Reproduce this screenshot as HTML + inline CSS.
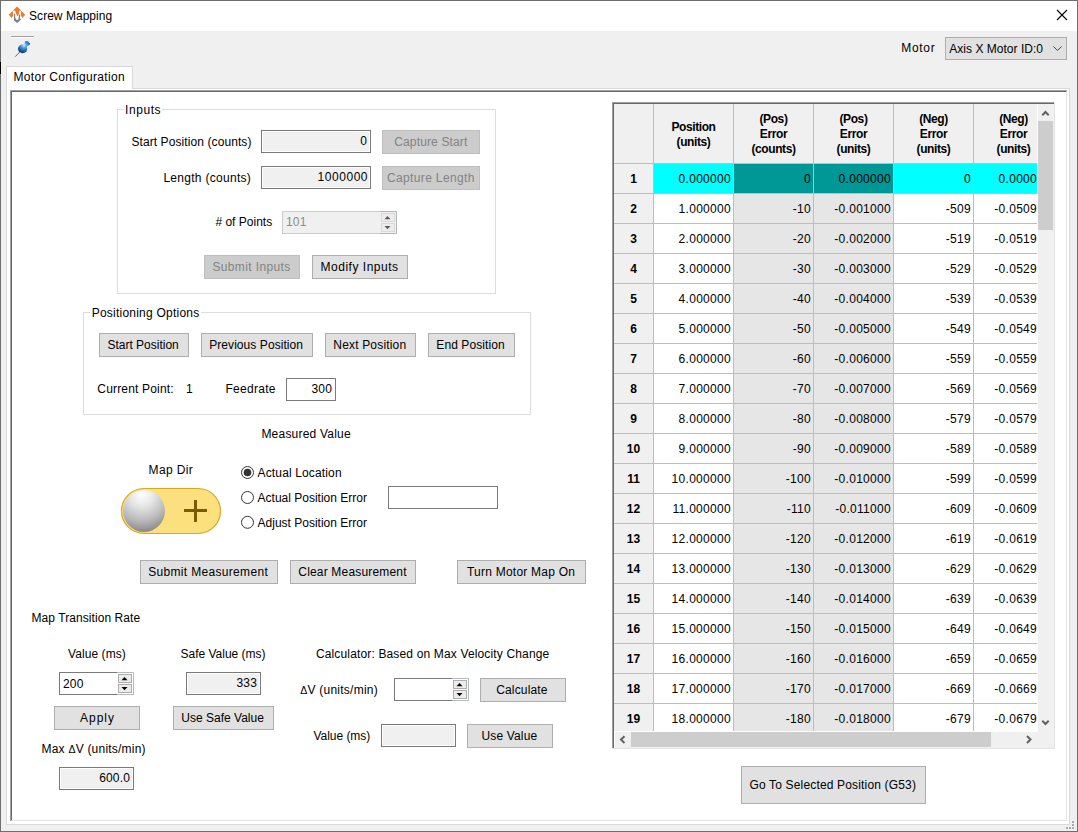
<!DOCTYPE html><html><head><meta charset="utf-8"><style>
html,body{margin:0;padding:0;} body{width:1078px;height:832px;position:relative;overflow:hidden;background:#f0f0f0;font-family:"Liberation Sans", sans-serif;font-size:12px;color:#000;}
.t{position:absolute;white-space:nowrap;line-height:15px;font-size:12px;}
.b{font-weight:bold;}
</style></head><body>
<div style="position:absolute;left:0px;top:0px;width:1076px;height:830px;border:1px solid #6e6e6e;background:#f0f0f0;"></div>
<div style="position:absolute;left:1px;top:1px;width:1076px;height:30px;background:#fff;"></div>
<div style="position:absolute;left:0px;top:62px;width:1px;height:12px;background:#000;"></div>
<svg style="position:absolute;left:0px;top:0px" width="30" height="30" viewBox="0 0 30 30"><path d="M17 6.5 L21.3 10.8 L19.2 10.8 L19 13.2 L18 16.2 L17.3 16.2 L15.8 13 L15.2 10.8 L12.8 10.8 Z" fill="#ee7b2b"/><path d="M8.8 14.8 L12.8 10.8 L13.2 15.6 L11.6 18 Z" fill="#ee7b2b"/><path d="M25.2 14.8 L21.2 10.8 L20.8 15.6 L22.4 18 Z" fill="#ee7b2b"/><path d="M14 13.8 L15.2 13.8 L15.2 17.6 L16.2 19.8 L18.4 19.8 L18.6 17.8 L19.2 14.6 L20.1 14.6 L20.1 18.6 L21 19.4 L17.2 23 L14 20.6 Z" fill="#7b7e83"/></svg>
<div class="t" style="left:29.10px;top:9px;letter-spacing:0.025px;">Screw Mapping</div>
<svg style="position:absolute;left:1056px;top:9px" width="12" height="12"><path d="M1 1L11 11M11 1L1 11" stroke="#000" stroke-width="1.1"/></svg>
<div style="position:absolute;left:11px;top:36px;width:23px;height:1px;background:#a0a0a0;"></div>
<div style="position:absolute;left:11px;top:37px;width:23px;height:1px;background:#fff;"></div>
<svg style="position:absolute;left:14px;top:40px" width="18" height="18" viewBox="0 0 18 18"><defs><radialGradient id="pg" cx="0.5" cy="0.35" r="0.65"><stop offset="0" stop-color="#d6eeff"/><stop offset="0.35" stop-color="#4f9ce0"/><stop offset="0.75" stop-color="#1b5ea6"/><stop offset="1" stop-color="#0a3468"/></radialGradient></defs><path d="M1.2 16.7 L6 11.8" stroke="#6a6a6a" stroke-width="1"/><path d="M4 8.5 Q4.5 5 8 4.5 L10.5 4 L11 1.2 L13.5 1 L16.2 3.6 L15.3 5.3 L12.8 6 Q13.8 9 12.5 11.5 Q10 13.6 7.5 13 Q4 12 4 8.5 Z" fill="url(#pg)"/></svg>
<div class="t" style="left:901.20px;top:41px;letter-spacing:0.700px;">Motor</div>
<div style="position:absolute;left:945px;top:37px;width:120px;height:21px;background:#e1e1e1;border:1px solid #adadad;"></div>
<div class="t" style="left:949.30px;top:42px;letter-spacing:0.019px;">Axis X Motor ID:0</div>
<svg style="position:absolute;left:1053px;top:45px" width="10" height="8"><path d="M0.5 1.5 L4.5 5.5 L8.5 1.5" stroke="#444" stroke-width="1" fill="none"/></svg>
<div style="position:absolute;left:6px;top:88px;width:1062px;height:735px;border:1px solid #d9d9d9;background:#fff;"></div>
<div style="position:absolute;left:6px;top:66px;width:125px;height:22px;border:1px solid #d9d9d9;border-bottom:none;background:#fff;"></div>
<div class="t" style="left:13.40px;top:70px;letter-spacing:0.328px;">Motor Configuration</div>
<div style="position:absolute;left:10px;top:90px;width:1057px;height:731px;border-top:2px solid #696969;border-left:2px solid #696969;border-right:1px solid #e3e3e3;border-bottom:1px solid #e3e3e3;box-sizing:border-box;background:#fff;"></div>
<div style="position:absolute;left:10px;top:90px;width:1057px;height:1px;background:#a0a0a0;"></div>
<div style="position:absolute;left:10px;top:90px;width:1px;height:731px;background:#a0a0a0;"></div>
<div style="position:absolute;left:117px;top:109px;width:377px;height:183px;border:1px solid #dcdcdc;"></div>
<div style="position:absolute;left:124px;top:109px;width:38px;height:1px;background:#fff;"></div>
<div class="t" style="left:125.00px;top:103px;letter-spacing:0.580px;">Inputs</div>
<div class="t" style="left:131.40px;top:135px;letter-spacing:0.091px;">Start Position (counts)</div>
<div style="position:absolute;left:261px;top:130px;width:108px;height:21px;background:#f0f0f0;border:1px solid #7a7a7a;box-shadow:inset 0 0 0 1px #fff;"></div>
<div class="t" style="left:-33px;width:400px;text-align:right;top:134px;letter-spacing:0.15px;margin-right:-0.15px;color:#000;">0</div>
<div style="position:absolute;left:382px;top:130px;width:96px;height:22px;background:#cccccc;border:1px solid #bfbfbf;color:#838383;box-sizing:content-box;"></div>
<div class="t" style="left:394.20px;top:135px;letter-spacing:0.150px;color:#838383;">Capture Start</div>
<div class="t" style="left:163.40px;top:171px;letter-spacing:0.286px;">Length (counts)</div>
<div style="position:absolute;left:261px;top:166px;width:108px;height:21px;background:#f0f0f0;border:1px solid #7a7a7a;box-shadow:inset 0 0 0 1px #fff;"></div>
<div class="t" style="left:317.60px;top:170px;letter-spacing:0.533px;color:#000;">1000000</div>
<div style="position:absolute;left:382px;top:166px;width:96px;height:22px;background:#cccccc;border:1px solid #bfbfbf;color:#838383;box-sizing:content-box;"></div>
<div class="t" style="left:387.00px;top:171px;letter-spacing:0.354px;color:#838383;">Capture Length</div>
<div class="t" style="left:215.40px;top:215px;letter-spacing:0.010px;"># of Points</div>
<div style="position:absolute;left:282px;top:211px;width:97px;height:21px;background:#f0f0f0;border:1px solid #cccccc;border-right:none;"></div>
<svg style="position:absolute;left:380px;top:211px" width="17" height="23"><rect x="0" y="0" width="17" height="23" fill="#f0f0f0"/><path d="M0 0.5H16.5V22.5H0" fill="none" stroke="#b0b4bb"/><rect x="1.5" y="2.5" width="13" height="8" fill="#ececec" stroke="#d9d9d9"/><rect x="1.5" y="12.5" width="13" height="8" fill="#ececec" stroke="#d9d9d9"/><path d="M4.5 8.2H10.5L7.5 5Z" fill="#5a5a5a"/><path d="M4.5 15H10.5L7.5 18.2Z" fill="#5a5a5a"/></svg>
<div class="t" style="left:286px;top:215px;letter-spacing:0.15px;color:#8a8a8a;">101</div>
<div style="position:absolute;left:204px;top:255px;width:94px;height:22px;background:#cccccc;border:1px solid #bfbfbf;color:#838383;box-sizing:content-box;"></div>
<div class="t" style="left:212.40px;top:260px;letter-spacing:0.375px;color:#838383;">Submit Inputs</div>
<div style="position:absolute;left:312px;top:255px;width:94px;height:22px;background:#e1e1e1;border:1px solid #adadad;color:#000;box-sizing:content-box;"></div>
<div class="t" style="left:320.50px;top:260px;letter-spacing:0.517px;">Modify Inputs</div>
<div style="position:absolute;left:83px;top:312px;width:446px;height:101px;border:1px solid #dcdcdc;"></div>
<div style="position:absolute;left:90px;top:312px;width:111px;height:1px;background:#fff;"></div>
<div class="t" style="left:91.70px;top:306px;letter-spacing:0.228px;">Positioning Options</div>
<div style="position:absolute;left:99px;top:333px;width:88px;height:22px;background:#e1e1e1;border:1px solid #adadad;color:#000;box-sizing:content-box;"></div>
<div class="t" style="left:107.40px;top:338px;letter-spacing:0.000px;">Start Position</div>
<div style="position:absolute;left:201px;top:333px;width:110px;height:22px;background:#e1e1e1;border:1px solid #adadad;color:#000;box-sizing:content-box;"></div>
<div class="t" style="left:209.20px;top:338px;letter-spacing:0.069px;">Previous Position</div>
<div style="position:absolute;left:325px;top:333px;width:89px;height:22px;background:#e1e1e1;border:1px solid #adadad;color:#000;box-sizing:content-box;"></div>
<div class="t" style="left:333.30px;top:338px;letter-spacing:0.175px;">Next Position</div>
<div style="position:absolute;left:428px;top:333px;width:85px;height:22px;background:#e1e1e1;border:1px solid #adadad;color:#000;box-sizing:content-box;"></div>
<div class="t" style="left:436.30px;top:338px;letter-spacing:0.091px;">End Position</div>
<div class="t" style="left:97.30px;top:382px;letter-spacing:0.177px;">Current Point:</div>
<div class="t" style="left:186px;top:382px;letter-spacing:0.15px;">1</div>
<div class="t" style="left:225.40px;top:382px;letter-spacing:0.300px;">Feedrate</div>
<div style="position:absolute;left:286px;top:378px;width:48px;height:21px;background:#fff;border:1px solid #7a7a7a;box-shadow:inset 0 0 0 1px #fff;"></div>
<div class="t" style="left:-68px;width:400px;text-align:right;top:382px;letter-spacing:0.15px;margin-right:-0.15px;color:#000;">300</div>
<div class="t" style="left:261.40px;top:427px;letter-spacing:0.215px;">Measured Value</div>
<div class="t" style="left:148.60px;top:463px;letter-spacing:0.350px;">Map Dir</div>
<svg style="position:absolute;left:120px;top:487px" width="102" height="48" viewBox="0 0 102 48"><defs><radialGradient id="kg" cx="0.45" cy="0.12" r="0.95" fx="0.45" fy="0.1"><stop offset="0" stop-color="#ffffff"/><stop offset="0.3" stop-color="#e6e6e6"/><stop offset="0.65" stop-color="#b9b9b9"/><stop offset="1" stop-color="#7e7e7e"/></radialGradient></defs><rect x="1.5" y="1.5" width="99" height="45" rx="22.5" ry="22.5" fill="#fde07e" stroke="#d6a823" stroke-width="1.2"/><circle cx="24" cy="24" r="21" fill="url(#kg)"/><rect x="64" y="22" width="23" height="3" fill="#7a5c00"/><rect x="74" y="13" width="3" height="22" fill="#7a5c00"/></svg>
<svg style="position:absolute;left:240px;top:465px" width="16" height="16"><circle cx="7.5" cy="7.5" r="6" fill="#fff" stroke="#333" stroke-width="1"/><circle cx="7.5" cy="7.5" r="3.8" fill="#333"/></svg>
<div class="t" style="left:257.60px;top:466px;letter-spacing:0.136px;">Actual Location</div>
<svg style="position:absolute;left:240px;top:490px" width="16" height="16"><circle cx="7.5" cy="7.5" r="6" fill="#fff" stroke="#333" stroke-width="1"/></svg>
<div class="t" style="left:257.60px;top:491px;letter-spacing:0.000px;">Actual Position Error</div>
<svg style="position:absolute;left:240px;top:515px" width="16" height="16"><circle cx="7.5" cy="7.2999999999999545" r="6" fill="#fff" stroke="#333" stroke-width="1"/></svg>
<div class="t" style="left:257.60px;top:516px;letter-spacing:0.000px;">Adjust Position Error</div>
<div style="position:absolute;left:388px;top:486px;width:108px;height:21px;background:#fff;border:1px solid #7a7a7a;box-shadow:inset 0 0 0 1px #fff;"></div>
<div style="position:absolute;left:140px;top:560px;width:136px;height:22px;background:#e1e1e1;border:1px solid #adadad;color:#000;box-sizing:content-box;"></div>
<div class="t" style="left:148.20px;top:565px;letter-spacing:0.324px;">Submit Measurement</div>
<div style="position:absolute;left:290px;top:560px;width:124px;height:22px;background:#e1e1e1;border:1px solid #adadad;color:#000;box-sizing:content-box;"></div>
<div class="t" style="left:298.30px;top:565px;letter-spacing:0.175px;">Clear Measurement</div>
<div style="position:absolute;left:457px;top:560px;width:127px;height:22px;background:#e1e1e1;border:1px solid #adadad;color:#000;box-sizing:content-box;"></div>
<div class="t" style="left:467.00px;top:565px;letter-spacing:0.231px;">Turn Motor Map On</div>
<div class="t" style="left:31.50px;top:611px;letter-spacing:0.067px;">Map Transition Rate</div>
<div class="t" style="left:68.00px;top:647px;letter-spacing:0.078px;">Value (ms)</div>
<div class="t" style="left:180.50px;top:647px;letter-spacing:-0.007px;">Safe Value (ms)</div>
<div style="position:absolute;left:59px;top:672px;width:57px;height:21px;background:#ffffff;border:1px solid #7a7a7a;border-right:none;"></div>
<svg style="position:absolute;left:117px;top:672px" width="17" height="23"><rect x="0" y="0" width="17" height="23" fill="#fff"/><path d="M0 0.5H16.5V22.5H0" fill="none" stroke="#b4b8bf"/><rect x="1.5" y="2.5" width="13" height="8" fill="#ececec" stroke="#adadad"/><rect x="1.5" y="12.5" width="13" height="8" fill="#ececec" stroke="#adadad"/><path d="M4.5 8.2H10.5L7.5 5Z" fill="#000"/><path d="M4.5 15H10.5L7.5 18.2Z" fill="#000"/></svg>
<div class="t" style="left:63px;top:677px;letter-spacing:0.15px;">200</div>
<div style="position:absolute;left:186px;top:672px;width:73px;height:21px;background:#f0f0f0;border:1px solid #7a7a7a;box-shadow:inset 0 0 0 1px #fff;"></div>
<div class="t" style="left:-143px;width:400px;text-align:right;top:676px;letter-spacing:0.15px;margin-right:-0.15px;color:#000;">333</div>
<div style="position:absolute;left:54px;top:706px;width:84px;height:22px;background:#e1e1e1;border:1px solid #adadad;color:#000;box-sizing:content-box;"></div>
<div class="t" style="left:80.10px;top:711px;letter-spacing:0.950px;">Apply</div>
<div style="position:absolute;left:173px;top:706px;width:99px;height:22px;background:#e1e1e1;border:1px solid #adadad;color:#000;box-sizing:content-box;"></div>
<div class="t" style="left:181.30px;top:711px;letter-spacing:0.008px;">Use Safe Value</div>
<div class="t" style="left:41.50px;top:742px;letter-spacing:0.218px;">Max <span style="font-size:10.5px">Δ</span>V (units/min)</div>
<div style="position:absolute;left:59px;top:767px;width:73px;height:21px;background:#f0f0f0;border:1px solid #7a7a7a;box-shadow:inset 0 0 0 1px #fff;"></div>
<div class="t" style="left:-270px;width:400px;text-align:right;top:771px;letter-spacing:0.15px;margin-right:-0.15px;color:#000;">600.0</div>
<div class="t" style="left:315.90px;top:647px;letter-spacing:0.151px;">Calculator: Based on Max Velocity Change</div>
<div class="t" style="left:300.20px;top:683px;letter-spacing:0.246px;"><span style="font-size:10.5px">Δ</span>V (units/min)</div>
<div style="position:absolute;left:394px;top:678px;width:57px;height:21px;background:#ffffff;border:1px solid #7a7a7a;border-right:none;"></div>
<svg style="position:absolute;left:452px;top:678px" width="17" height="23"><rect x="0" y="0" width="17" height="23" fill="#fff"/><path d="M0 0.5H16.5V22.5H0" fill="none" stroke="#b4b8bf"/><rect x="1.5" y="2.5" width="13" height="8" fill="#ececec" stroke="#adadad"/><rect x="1.5" y="12.5" width="13" height="8" fill="#ececec" stroke="#adadad"/><path d="M4.5 8.2H10.5L7.5 5Z" fill="#000"/><path d="M4.5 15H10.5L7.5 18.2Z" fill="#000"/></svg>
<div style="position:absolute;left:480px;top:678px;width:84px;height:22px;background:#e1e1e1;border:1px solid #adadad;color:#000;box-sizing:content-box;"></div>
<div class="t" style="left:496.20px;top:683px;letter-spacing:0.163px;">Calculate</div>
<div class="t" style="left:313.40px;top:729px;letter-spacing:-0.022px;">Value (ms)</div>
<div style="position:absolute;left:381px;top:724px;width:73px;height:21px;background:#f0f0f0;border:1px solid #7a7a7a;box-shadow:inset 0 0 0 1px #fff;"></div>
<div style="position:absolute;left:467px;top:724px;width:84px;height:22px;background:#e1e1e1;border:1px solid #adadad;color:#000;box-sizing:content-box;"></div>
<div class="t" style="left:481.40px;top:729px;letter-spacing:0.163px;">Use Value</div>
<div style="position:absolute;left:612px;top:102px;width:443px;height:647px;background:#f0f0f0;"></div>
<div style="position:absolute;left:612px;top:102px;width:443px;height:1px;background:#a0a0a0;"></div>
<div style="position:absolute;left:612px;top:103px;width:442px;height:1px;background:#696969;"></div>
<div style="position:absolute;left:612px;top:102px;width:1px;height:647px;background:#a0a0a0;"></div>
<div style="position:absolute;left:613px;top:103px;width:1px;height:645px;background:#696969;"></div>
<div style="position:absolute;left:1054px;top:102px;width:1px;height:647px;background:#e3e3e3;"></div>
<div style="position:absolute;left:612px;top:748px;width:443px;height:1px;background:#e3e3e3;"></div>
<div style="position:absolute;left:614px;top:104px;width:423px;height:627px;overflow:hidden;background:#fff;">
<div style="position:absolute;left:0px;top:0;width:39px;height:59px;background:#f0f0f0;"></div>
<div style="position:absolute;left:39px;top:0;width:1px;height:59px;background:#bdbdbd;"></div>
<div style="position:absolute;left:40px;top:0;width:79px;height:59px;background:#f0f0f0;"></div>
<div style="position:absolute;left:119px;top:0;width:1px;height:59px;background:#bdbdbd;"></div>
<div class="t b" style="left:40px;width:79px;text-align:center;top:16px;letter-spacing:-0.4px;">Position<br>(units)</div>
<div style="position:absolute;left:120px;top:0;width:79px;height:59px;background:#f0f0f0;"></div>
<div style="position:absolute;left:199px;top:0;width:1px;height:59px;background:#bdbdbd;"></div>
<div class="t b" style="left:120px;width:79px;text-align:center;top:8px;letter-spacing:-0.4px;">(Pos)<br>Error<br>(counts)</div>
<div style="position:absolute;left:200px;top:0;width:79px;height:59px;background:#f0f0f0;"></div>
<div style="position:absolute;left:279px;top:0;width:1px;height:59px;background:#bdbdbd;"></div>
<div class="t b" style="left:200px;width:79px;text-align:center;top:8px;letter-spacing:-0.4px;">(Pos)<br>Error<br>(units)</div>
<div style="position:absolute;left:280px;top:0;width:79px;height:59px;background:#f0f0f0;"></div>
<div style="position:absolute;left:359px;top:0;width:1px;height:59px;background:#bdbdbd;"></div>
<div class="t b" style="left:280px;width:79px;text-align:center;top:8px;letter-spacing:-0.4px;">(Neg)<br>Error<br>(units)</div>
<div style="position:absolute;left:360px;top:0;width:79px;height:59px;background:#f0f0f0;"></div>
<div style="position:absolute;left:439px;top:0;width:1px;height:59px;background:#bdbdbd;"></div>
<div class="t b" style="left:360px;width:79px;text-align:center;top:8px;letter-spacing:-0.4px;">(Neg)<br>Error<br>(units)</div>
<div style="position:absolute;left:0;top:59px;width:423px;height:1px;background:#bdbdbd;"></div>
<div style="position:absolute;left:0px;top:60px;width:39px;height:29px;background:#f0f0f0;"></div>
<div style="position:absolute;left:39px;top:60px;width:1px;height:29px;background:#bdbdbd;"></div>
<div class="t b" style="left:0px;width:39px;text-align:center;top:68px;">1</div>
<div style="position:absolute;left:40px;top:60px;width:79px;height:29px;background:#00ffff;"></div>
<div style="position:absolute;left:119px;top:60px;width:1px;height:29px;background:#bdbdbd;"></div>
<div class="t" style="left:40px;width:77px;text-align:right;top:68px;letter-spacing:0.3px;margin-right:-0.3px;box-sizing:content-box;padding-right:0;">0.000000</div>
<div style="position:absolute;left:120px;top:60px;width:79px;height:29px;background:#009797;"></div>
<div style="position:absolute;left:199px;top:60px;width:1px;height:29px;background:#bdbdbd;"></div>
<div class="t" style="left:120px;width:77px;text-align:right;top:68px;letter-spacing:0.3px;margin-right:-0.3px;box-sizing:content-box;padding-right:0;">0</div>
<div style="position:absolute;left:200px;top:60px;width:79px;height:29px;background:#009797;"></div>
<div style="position:absolute;left:279px;top:60px;width:1px;height:29px;background:#bdbdbd;"></div>
<div class="t" style="left:200px;width:77px;text-align:right;top:68px;letter-spacing:0.3px;margin-right:-0.3px;box-sizing:content-box;padding-right:0;">0.000000</div>
<div style="position:absolute;left:280px;top:60px;width:79px;height:29px;background:#00ffff;"></div>
<div style="position:absolute;left:359px;top:60px;width:1px;height:29px;background:#bdbdbd;"></div>
<div class="t" style="left:280px;width:77px;text-align:right;top:68px;letter-spacing:0.3px;margin-right:-0.3px;box-sizing:content-box;padding-right:0;">0</div>
<div style="position:absolute;left:360px;top:60px;width:79px;height:29px;background:#00ffff;"></div>
<div style="position:absolute;left:439px;top:60px;width:1px;height:29px;background:#bdbdbd;"></div>
<div class="t" style="left:360px;width:77px;text-align:right;top:68px;letter-spacing:0.3px;margin-right:-0.3px;box-sizing:content-box;padding-right:0;">0.000000</div>
<div style="position:absolute;left:0;top:89px;width:423px;height:1px;background:#bdbdbd;"></div>
<div style="position:absolute;left:0px;top:90px;width:39px;height:29px;background:#f0f0f0;"></div>
<div style="position:absolute;left:39px;top:90px;width:1px;height:29px;background:#bdbdbd;"></div>
<div class="t b" style="left:0px;width:39px;text-align:center;top:98px;">2</div>
<div style="position:absolute;left:40px;top:90px;width:79px;height:29px;background:#ffffff;"></div>
<div style="position:absolute;left:119px;top:90px;width:1px;height:29px;background:#bdbdbd;"></div>
<div class="t" style="left:40px;width:77px;text-align:right;top:98px;letter-spacing:0.3px;margin-right:-0.3px;box-sizing:content-box;padding-right:0;">1.000000</div>
<div style="position:absolute;left:120px;top:90px;width:79px;height:29px;background:#e6e6e6;"></div>
<div style="position:absolute;left:199px;top:90px;width:1px;height:29px;background:#bdbdbd;"></div>
<div class="t" style="left:120px;width:77px;text-align:right;top:98px;letter-spacing:0.3px;margin-right:-0.3px;box-sizing:content-box;padding-right:0;">-10</div>
<div style="position:absolute;left:200px;top:90px;width:79px;height:29px;background:#e6e6e6;"></div>
<div style="position:absolute;left:279px;top:90px;width:1px;height:29px;background:#bdbdbd;"></div>
<div class="t" style="left:200px;width:77px;text-align:right;top:98px;letter-spacing:0.3px;margin-right:-0.3px;box-sizing:content-box;padding-right:0;">-0.001000</div>
<div style="position:absolute;left:280px;top:90px;width:79px;height:29px;background:#ffffff;"></div>
<div style="position:absolute;left:359px;top:90px;width:1px;height:29px;background:#bdbdbd;"></div>
<div class="t" style="left:280px;width:77px;text-align:right;top:98px;letter-spacing:0.3px;margin-right:-0.3px;box-sizing:content-box;padding-right:0;">-509</div>
<div style="position:absolute;left:360px;top:90px;width:79px;height:29px;background:#ffffff;"></div>
<div style="position:absolute;left:439px;top:90px;width:1px;height:29px;background:#bdbdbd;"></div>
<div class="t" style="left:360px;width:77px;text-align:right;top:98px;letter-spacing:0.3px;margin-right:-0.3px;box-sizing:content-box;padding-right:0;">-0.050900</div>
<div style="position:absolute;left:0;top:119px;width:423px;height:1px;background:#bdbdbd;"></div>
<div style="position:absolute;left:0px;top:120px;width:39px;height:29px;background:#f0f0f0;"></div>
<div style="position:absolute;left:39px;top:120px;width:1px;height:29px;background:#bdbdbd;"></div>
<div class="t b" style="left:0px;width:39px;text-align:center;top:128px;">3</div>
<div style="position:absolute;left:40px;top:120px;width:79px;height:29px;background:#ffffff;"></div>
<div style="position:absolute;left:119px;top:120px;width:1px;height:29px;background:#bdbdbd;"></div>
<div class="t" style="left:40px;width:77px;text-align:right;top:128px;letter-spacing:0.3px;margin-right:-0.3px;box-sizing:content-box;padding-right:0;">2.000000</div>
<div style="position:absolute;left:120px;top:120px;width:79px;height:29px;background:#e6e6e6;"></div>
<div style="position:absolute;left:199px;top:120px;width:1px;height:29px;background:#bdbdbd;"></div>
<div class="t" style="left:120px;width:77px;text-align:right;top:128px;letter-spacing:0.3px;margin-right:-0.3px;box-sizing:content-box;padding-right:0;">-20</div>
<div style="position:absolute;left:200px;top:120px;width:79px;height:29px;background:#e6e6e6;"></div>
<div style="position:absolute;left:279px;top:120px;width:1px;height:29px;background:#bdbdbd;"></div>
<div class="t" style="left:200px;width:77px;text-align:right;top:128px;letter-spacing:0.3px;margin-right:-0.3px;box-sizing:content-box;padding-right:0;">-0.002000</div>
<div style="position:absolute;left:280px;top:120px;width:79px;height:29px;background:#ffffff;"></div>
<div style="position:absolute;left:359px;top:120px;width:1px;height:29px;background:#bdbdbd;"></div>
<div class="t" style="left:280px;width:77px;text-align:right;top:128px;letter-spacing:0.3px;margin-right:-0.3px;box-sizing:content-box;padding-right:0;">-519</div>
<div style="position:absolute;left:360px;top:120px;width:79px;height:29px;background:#ffffff;"></div>
<div style="position:absolute;left:439px;top:120px;width:1px;height:29px;background:#bdbdbd;"></div>
<div class="t" style="left:360px;width:77px;text-align:right;top:128px;letter-spacing:0.3px;margin-right:-0.3px;box-sizing:content-box;padding-right:0;">-0.051900</div>
<div style="position:absolute;left:0;top:149px;width:423px;height:1px;background:#bdbdbd;"></div>
<div style="position:absolute;left:0px;top:150px;width:39px;height:29px;background:#f0f0f0;"></div>
<div style="position:absolute;left:39px;top:150px;width:1px;height:29px;background:#bdbdbd;"></div>
<div class="t b" style="left:0px;width:39px;text-align:center;top:158px;">4</div>
<div style="position:absolute;left:40px;top:150px;width:79px;height:29px;background:#ffffff;"></div>
<div style="position:absolute;left:119px;top:150px;width:1px;height:29px;background:#bdbdbd;"></div>
<div class="t" style="left:40px;width:77px;text-align:right;top:158px;letter-spacing:0.3px;margin-right:-0.3px;box-sizing:content-box;padding-right:0;">3.000000</div>
<div style="position:absolute;left:120px;top:150px;width:79px;height:29px;background:#e6e6e6;"></div>
<div style="position:absolute;left:199px;top:150px;width:1px;height:29px;background:#bdbdbd;"></div>
<div class="t" style="left:120px;width:77px;text-align:right;top:158px;letter-spacing:0.3px;margin-right:-0.3px;box-sizing:content-box;padding-right:0;">-30</div>
<div style="position:absolute;left:200px;top:150px;width:79px;height:29px;background:#e6e6e6;"></div>
<div style="position:absolute;left:279px;top:150px;width:1px;height:29px;background:#bdbdbd;"></div>
<div class="t" style="left:200px;width:77px;text-align:right;top:158px;letter-spacing:0.3px;margin-right:-0.3px;box-sizing:content-box;padding-right:0;">-0.003000</div>
<div style="position:absolute;left:280px;top:150px;width:79px;height:29px;background:#ffffff;"></div>
<div style="position:absolute;left:359px;top:150px;width:1px;height:29px;background:#bdbdbd;"></div>
<div class="t" style="left:280px;width:77px;text-align:right;top:158px;letter-spacing:0.3px;margin-right:-0.3px;box-sizing:content-box;padding-right:0;">-529</div>
<div style="position:absolute;left:360px;top:150px;width:79px;height:29px;background:#ffffff;"></div>
<div style="position:absolute;left:439px;top:150px;width:1px;height:29px;background:#bdbdbd;"></div>
<div class="t" style="left:360px;width:77px;text-align:right;top:158px;letter-spacing:0.3px;margin-right:-0.3px;box-sizing:content-box;padding-right:0;">-0.052900</div>
<div style="position:absolute;left:0;top:179px;width:423px;height:1px;background:#bdbdbd;"></div>
<div style="position:absolute;left:0px;top:180px;width:39px;height:29px;background:#f0f0f0;"></div>
<div style="position:absolute;left:39px;top:180px;width:1px;height:29px;background:#bdbdbd;"></div>
<div class="t b" style="left:0px;width:39px;text-align:center;top:188px;">5</div>
<div style="position:absolute;left:40px;top:180px;width:79px;height:29px;background:#ffffff;"></div>
<div style="position:absolute;left:119px;top:180px;width:1px;height:29px;background:#bdbdbd;"></div>
<div class="t" style="left:40px;width:77px;text-align:right;top:188px;letter-spacing:0.3px;margin-right:-0.3px;box-sizing:content-box;padding-right:0;">4.000000</div>
<div style="position:absolute;left:120px;top:180px;width:79px;height:29px;background:#e6e6e6;"></div>
<div style="position:absolute;left:199px;top:180px;width:1px;height:29px;background:#bdbdbd;"></div>
<div class="t" style="left:120px;width:77px;text-align:right;top:188px;letter-spacing:0.3px;margin-right:-0.3px;box-sizing:content-box;padding-right:0;">-40</div>
<div style="position:absolute;left:200px;top:180px;width:79px;height:29px;background:#e6e6e6;"></div>
<div style="position:absolute;left:279px;top:180px;width:1px;height:29px;background:#bdbdbd;"></div>
<div class="t" style="left:200px;width:77px;text-align:right;top:188px;letter-spacing:0.3px;margin-right:-0.3px;box-sizing:content-box;padding-right:0;">-0.004000</div>
<div style="position:absolute;left:280px;top:180px;width:79px;height:29px;background:#ffffff;"></div>
<div style="position:absolute;left:359px;top:180px;width:1px;height:29px;background:#bdbdbd;"></div>
<div class="t" style="left:280px;width:77px;text-align:right;top:188px;letter-spacing:0.3px;margin-right:-0.3px;box-sizing:content-box;padding-right:0;">-539</div>
<div style="position:absolute;left:360px;top:180px;width:79px;height:29px;background:#ffffff;"></div>
<div style="position:absolute;left:439px;top:180px;width:1px;height:29px;background:#bdbdbd;"></div>
<div class="t" style="left:360px;width:77px;text-align:right;top:188px;letter-spacing:0.3px;margin-right:-0.3px;box-sizing:content-box;padding-right:0;">-0.053900</div>
<div style="position:absolute;left:0;top:209px;width:423px;height:1px;background:#bdbdbd;"></div>
<div style="position:absolute;left:0px;top:210px;width:39px;height:29px;background:#f0f0f0;"></div>
<div style="position:absolute;left:39px;top:210px;width:1px;height:29px;background:#bdbdbd;"></div>
<div class="t b" style="left:0px;width:39px;text-align:center;top:218px;">6</div>
<div style="position:absolute;left:40px;top:210px;width:79px;height:29px;background:#ffffff;"></div>
<div style="position:absolute;left:119px;top:210px;width:1px;height:29px;background:#bdbdbd;"></div>
<div class="t" style="left:40px;width:77px;text-align:right;top:218px;letter-spacing:0.3px;margin-right:-0.3px;box-sizing:content-box;padding-right:0;">5.000000</div>
<div style="position:absolute;left:120px;top:210px;width:79px;height:29px;background:#e6e6e6;"></div>
<div style="position:absolute;left:199px;top:210px;width:1px;height:29px;background:#bdbdbd;"></div>
<div class="t" style="left:120px;width:77px;text-align:right;top:218px;letter-spacing:0.3px;margin-right:-0.3px;box-sizing:content-box;padding-right:0;">-50</div>
<div style="position:absolute;left:200px;top:210px;width:79px;height:29px;background:#e6e6e6;"></div>
<div style="position:absolute;left:279px;top:210px;width:1px;height:29px;background:#bdbdbd;"></div>
<div class="t" style="left:200px;width:77px;text-align:right;top:218px;letter-spacing:0.3px;margin-right:-0.3px;box-sizing:content-box;padding-right:0;">-0.005000</div>
<div style="position:absolute;left:280px;top:210px;width:79px;height:29px;background:#ffffff;"></div>
<div style="position:absolute;left:359px;top:210px;width:1px;height:29px;background:#bdbdbd;"></div>
<div class="t" style="left:280px;width:77px;text-align:right;top:218px;letter-spacing:0.3px;margin-right:-0.3px;box-sizing:content-box;padding-right:0;">-549</div>
<div style="position:absolute;left:360px;top:210px;width:79px;height:29px;background:#ffffff;"></div>
<div style="position:absolute;left:439px;top:210px;width:1px;height:29px;background:#bdbdbd;"></div>
<div class="t" style="left:360px;width:77px;text-align:right;top:218px;letter-spacing:0.3px;margin-right:-0.3px;box-sizing:content-box;padding-right:0;">-0.054900</div>
<div style="position:absolute;left:0;top:239px;width:423px;height:1px;background:#bdbdbd;"></div>
<div style="position:absolute;left:0px;top:240px;width:39px;height:29px;background:#f0f0f0;"></div>
<div style="position:absolute;left:39px;top:240px;width:1px;height:29px;background:#bdbdbd;"></div>
<div class="t b" style="left:0px;width:39px;text-align:center;top:248px;">7</div>
<div style="position:absolute;left:40px;top:240px;width:79px;height:29px;background:#ffffff;"></div>
<div style="position:absolute;left:119px;top:240px;width:1px;height:29px;background:#bdbdbd;"></div>
<div class="t" style="left:40px;width:77px;text-align:right;top:248px;letter-spacing:0.3px;margin-right:-0.3px;box-sizing:content-box;padding-right:0;">6.000000</div>
<div style="position:absolute;left:120px;top:240px;width:79px;height:29px;background:#e6e6e6;"></div>
<div style="position:absolute;left:199px;top:240px;width:1px;height:29px;background:#bdbdbd;"></div>
<div class="t" style="left:120px;width:77px;text-align:right;top:248px;letter-spacing:0.3px;margin-right:-0.3px;box-sizing:content-box;padding-right:0;">-60</div>
<div style="position:absolute;left:200px;top:240px;width:79px;height:29px;background:#e6e6e6;"></div>
<div style="position:absolute;left:279px;top:240px;width:1px;height:29px;background:#bdbdbd;"></div>
<div class="t" style="left:200px;width:77px;text-align:right;top:248px;letter-spacing:0.3px;margin-right:-0.3px;box-sizing:content-box;padding-right:0;">-0.006000</div>
<div style="position:absolute;left:280px;top:240px;width:79px;height:29px;background:#ffffff;"></div>
<div style="position:absolute;left:359px;top:240px;width:1px;height:29px;background:#bdbdbd;"></div>
<div class="t" style="left:280px;width:77px;text-align:right;top:248px;letter-spacing:0.3px;margin-right:-0.3px;box-sizing:content-box;padding-right:0;">-559</div>
<div style="position:absolute;left:360px;top:240px;width:79px;height:29px;background:#ffffff;"></div>
<div style="position:absolute;left:439px;top:240px;width:1px;height:29px;background:#bdbdbd;"></div>
<div class="t" style="left:360px;width:77px;text-align:right;top:248px;letter-spacing:0.3px;margin-right:-0.3px;box-sizing:content-box;padding-right:0;">-0.055900</div>
<div style="position:absolute;left:0;top:269px;width:423px;height:1px;background:#bdbdbd;"></div>
<div style="position:absolute;left:0px;top:270px;width:39px;height:29px;background:#f0f0f0;"></div>
<div style="position:absolute;left:39px;top:270px;width:1px;height:29px;background:#bdbdbd;"></div>
<div class="t b" style="left:0px;width:39px;text-align:center;top:278px;">8</div>
<div style="position:absolute;left:40px;top:270px;width:79px;height:29px;background:#ffffff;"></div>
<div style="position:absolute;left:119px;top:270px;width:1px;height:29px;background:#bdbdbd;"></div>
<div class="t" style="left:40px;width:77px;text-align:right;top:278px;letter-spacing:0.3px;margin-right:-0.3px;box-sizing:content-box;padding-right:0;">7.000000</div>
<div style="position:absolute;left:120px;top:270px;width:79px;height:29px;background:#e6e6e6;"></div>
<div style="position:absolute;left:199px;top:270px;width:1px;height:29px;background:#bdbdbd;"></div>
<div class="t" style="left:120px;width:77px;text-align:right;top:278px;letter-spacing:0.3px;margin-right:-0.3px;box-sizing:content-box;padding-right:0;">-70</div>
<div style="position:absolute;left:200px;top:270px;width:79px;height:29px;background:#e6e6e6;"></div>
<div style="position:absolute;left:279px;top:270px;width:1px;height:29px;background:#bdbdbd;"></div>
<div class="t" style="left:200px;width:77px;text-align:right;top:278px;letter-spacing:0.3px;margin-right:-0.3px;box-sizing:content-box;padding-right:0;">-0.007000</div>
<div style="position:absolute;left:280px;top:270px;width:79px;height:29px;background:#ffffff;"></div>
<div style="position:absolute;left:359px;top:270px;width:1px;height:29px;background:#bdbdbd;"></div>
<div class="t" style="left:280px;width:77px;text-align:right;top:278px;letter-spacing:0.3px;margin-right:-0.3px;box-sizing:content-box;padding-right:0;">-569</div>
<div style="position:absolute;left:360px;top:270px;width:79px;height:29px;background:#ffffff;"></div>
<div style="position:absolute;left:439px;top:270px;width:1px;height:29px;background:#bdbdbd;"></div>
<div class="t" style="left:360px;width:77px;text-align:right;top:278px;letter-spacing:0.3px;margin-right:-0.3px;box-sizing:content-box;padding-right:0;">-0.056900</div>
<div style="position:absolute;left:0;top:299px;width:423px;height:1px;background:#bdbdbd;"></div>
<div style="position:absolute;left:0px;top:300px;width:39px;height:29px;background:#f0f0f0;"></div>
<div style="position:absolute;left:39px;top:300px;width:1px;height:29px;background:#bdbdbd;"></div>
<div class="t b" style="left:0px;width:39px;text-align:center;top:308px;">9</div>
<div style="position:absolute;left:40px;top:300px;width:79px;height:29px;background:#ffffff;"></div>
<div style="position:absolute;left:119px;top:300px;width:1px;height:29px;background:#bdbdbd;"></div>
<div class="t" style="left:40px;width:77px;text-align:right;top:308px;letter-spacing:0.3px;margin-right:-0.3px;box-sizing:content-box;padding-right:0;">8.000000</div>
<div style="position:absolute;left:120px;top:300px;width:79px;height:29px;background:#e6e6e6;"></div>
<div style="position:absolute;left:199px;top:300px;width:1px;height:29px;background:#bdbdbd;"></div>
<div class="t" style="left:120px;width:77px;text-align:right;top:308px;letter-spacing:0.3px;margin-right:-0.3px;box-sizing:content-box;padding-right:0;">-80</div>
<div style="position:absolute;left:200px;top:300px;width:79px;height:29px;background:#e6e6e6;"></div>
<div style="position:absolute;left:279px;top:300px;width:1px;height:29px;background:#bdbdbd;"></div>
<div class="t" style="left:200px;width:77px;text-align:right;top:308px;letter-spacing:0.3px;margin-right:-0.3px;box-sizing:content-box;padding-right:0;">-0.008000</div>
<div style="position:absolute;left:280px;top:300px;width:79px;height:29px;background:#ffffff;"></div>
<div style="position:absolute;left:359px;top:300px;width:1px;height:29px;background:#bdbdbd;"></div>
<div class="t" style="left:280px;width:77px;text-align:right;top:308px;letter-spacing:0.3px;margin-right:-0.3px;box-sizing:content-box;padding-right:0;">-579</div>
<div style="position:absolute;left:360px;top:300px;width:79px;height:29px;background:#ffffff;"></div>
<div style="position:absolute;left:439px;top:300px;width:1px;height:29px;background:#bdbdbd;"></div>
<div class="t" style="left:360px;width:77px;text-align:right;top:308px;letter-spacing:0.3px;margin-right:-0.3px;box-sizing:content-box;padding-right:0;">-0.057900</div>
<div style="position:absolute;left:0;top:329px;width:423px;height:1px;background:#bdbdbd;"></div>
<div style="position:absolute;left:0px;top:330px;width:39px;height:29px;background:#f0f0f0;"></div>
<div style="position:absolute;left:39px;top:330px;width:1px;height:29px;background:#bdbdbd;"></div>
<div class="t b" style="left:0px;width:39px;text-align:center;top:338px;">10</div>
<div style="position:absolute;left:40px;top:330px;width:79px;height:29px;background:#ffffff;"></div>
<div style="position:absolute;left:119px;top:330px;width:1px;height:29px;background:#bdbdbd;"></div>
<div class="t" style="left:40px;width:77px;text-align:right;top:338px;letter-spacing:0.3px;margin-right:-0.3px;box-sizing:content-box;padding-right:0;">9.000000</div>
<div style="position:absolute;left:120px;top:330px;width:79px;height:29px;background:#e6e6e6;"></div>
<div style="position:absolute;left:199px;top:330px;width:1px;height:29px;background:#bdbdbd;"></div>
<div class="t" style="left:120px;width:77px;text-align:right;top:338px;letter-spacing:0.3px;margin-right:-0.3px;box-sizing:content-box;padding-right:0;">-90</div>
<div style="position:absolute;left:200px;top:330px;width:79px;height:29px;background:#e6e6e6;"></div>
<div style="position:absolute;left:279px;top:330px;width:1px;height:29px;background:#bdbdbd;"></div>
<div class="t" style="left:200px;width:77px;text-align:right;top:338px;letter-spacing:0.3px;margin-right:-0.3px;box-sizing:content-box;padding-right:0;">-0.009000</div>
<div style="position:absolute;left:280px;top:330px;width:79px;height:29px;background:#ffffff;"></div>
<div style="position:absolute;left:359px;top:330px;width:1px;height:29px;background:#bdbdbd;"></div>
<div class="t" style="left:280px;width:77px;text-align:right;top:338px;letter-spacing:0.3px;margin-right:-0.3px;box-sizing:content-box;padding-right:0;">-589</div>
<div style="position:absolute;left:360px;top:330px;width:79px;height:29px;background:#ffffff;"></div>
<div style="position:absolute;left:439px;top:330px;width:1px;height:29px;background:#bdbdbd;"></div>
<div class="t" style="left:360px;width:77px;text-align:right;top:338px;letter-spacing:0.3px;margin-right:-0.3px;box-sizing:content-box;padding-right:0;">-0.058900</div>
<div style="position:absolute;left:0;top:359px;width:423px;height:1px;background:#bdbdbd;"></div>
<div style="position:absolute;left:0px;top:360px;width:39px;height:29px;background:#f0f0f0;"></div>
<div style="position:absolute;left:39px;top:360px;width:1px;height:29px;background:#bdbdbd;"></div>
<div class="t b" style="left:0px;width:39px;text-align:center;top:368px;">11</div>
<div style="position:absolute;left:40px;top:360px;width:79px;height:29px;background:#ffffff;"></div>
<div style="position:absolute;left:119px;top:360px;width:1px;height:29px;background:#bdbdbd;"></div>
<div class="t" style="left:40px;width:77px;text-align:right;top:368px;letter-spacing:0.3px;margin-right:-0.3px;box-sizing:content-box;padding-right:0;">10.000000</div>
<div style="position:absolute;left:120px;top:360px;width:79px;height:29px;background:#e6e6e6;"></div>
<div style="position:absolute;left:199px;top:360px;width:1px;height:29px;background:#bdbdbd;"></div>
<div class="t" style="left:120px;width:77px;text-align:right;top:368px;letter-spacing:0.3px;margin-right:-0.3px;box-sizing:content-box;padding-right:0;">-100</div>
<div style="position:absolute;left:200px;top:360px;width:79px;height:29px;background:#e6e6e6;"></div>
<div style="position:absolute;left:279px;top:360px;width:1px;height:29px;background:#bdbdbd;"></div>
<div class="t" style="left:200px;width:77px;text-align:right;top:368px;letter-spacing:0.3px;margin-right:-0.3px;box-sizing:content-box;padding-right:0;">-0.010000</div>
<div style="position:absolute;left:280px;top:360px;width:79px;height:29px;background:#ffffff;"></div>
<div style="position:absolute;left:359px;top:360px;width:1px;height:29px;background:#bdbdbd;"></div>
<div class="t" style="left:280px;width:77px;text-align:right;top:368px;letter-spacing:0.3px;margin-right:-0.3px;box-sizing:content-box;padding-right:0;">-599</div>
<div style="position:absolute;left:360px;top:360px;width:79px;height:29px;background:#ffffff;"></div>
<div style="position:absolute;left:439px;top:360px;width:1px;height:29px;background:#bdbdbd;"></div>
<div class="t" style="left:360px;width:77px;text-align:right;top:368px;letter-spacing:0.3px;margin-right:-0.3px;box-sizing:content-box;padding-right:0;">-0.059900</div>
<div style="position:absolute;left:0;top:389px;width:423px;height:1px;background:#bdbdbd;"></div>
<div style="position:absolute;left:0px;top:390px;width:39px;height:29px;background:#f0f0f0;"></div>
<div style="position:absolute;left:39px;top:390px;width:1px;height:29px;background:#bdbdbd;"></div>
<div class="t b" style="left:0px;width:39px;text-align:center;top:398px;">12</div>
<div style="position:absolute;left:40px;top:390px;width:79px;height:29px;background:#ffffff;"></div>
<div style="position:absolute;left:119px;top:390px;width:1px;height:29px;background:#bdbdbd;"></div>
<div class="t" style="left:40px;width:77px;text-align:right;top:398px;letter-spacing:0.3px;margin-right:-0.3px;box-sizing:content-box;padding-right:0;">11.000000</div>
<div style="position:absolute;left:120px;top:390px;width:79px;height:29px;background:#e6e6e6;"></div>
<div style="position:absolute;left:199px;top:390px;width:1px;height:29px;background:#bdbdbd;"></div>
<div class="t" style="left:120px;width:77px;text-align:right;top:398px;letter-spacing:0.3px;margin-right:-0.3px;box-sizing:content-box;padding-right:0;">-110</div>
<div style="position:absolute;left:200px;top:390px;width:79px;height:29px;background:#e6e6e6;"></div>
<div style="position:absolute;left:279px;top:390px;width:1px;height:29px;background:#bdbdbd;"></div>
<div class="t" style="left:200px;width:77px;text-align:right;top:398px;letter-spacing:0.3px;margin-right:-0.3px;box-sizing:content-box;padding-right:0;">-0.011000</div>
<div style="position:absolute;left:280px;top:390px;width:79px;height:29px;background:#ffffff;"></div>
<div style="position:absolute;left:359px;top:390px;width:1px;height:29px;background:#bdbdbd;"></div>
<div class="t" style="left:280px;width:77px;text-align:right;top:398px;letter-spacing:0.3px;margin-right:-0.3px;box-sizing:content-box;padding-right:0;">-609</div>
<div style="position:absolute;left:360px;top:390px;width:79px;height:29px;background:#ffffff;"></div>
<div style="position:absolute;left:439px;top:390px;width:1px;height:29px;background:#bdbdbd;"></div>
<div class="t" style="left:360px;width:77px;text-align:right;top:398px;letter-spacing:0.3px;margin-right:-0.3px;box-sizing:content-box;padding-right:0;">-0.060900</div>
<div style="position:absolute;left:0;top:419px;width:423px;height:1px;background:#bdbdbd;"></div>
<div style="position:absolute;left:0px;top:420px;width:39px;height:29px;background:#f0f0f0;"></div>
<div style="position:absolute;left:39px;top:420px;width:1px;height:29px;background:#bdbdbd;"></div>
<div class="t b" style="left:0px;width:39px;text-align:center;top:428px;">13</div>
<div style="position:absolute;left:40px;top:420px;width:79px;height:29px;background:#ffffff;"></div>
<div style="position:absolute;left:119px;top:420px;width:1px;height:29px;background:#bdbdbd;"></div>
<div class="t" style="left:40px;width:77px;text-align:right;top:428px;letter-spacing:0.3px;margin-right:-0.3px;box-sizing:content-box;padding-right:0;">12.000000</div>
<div style="position:absolute;left:120px;top:420px;width:79px;height:29px;background:#e6e6e6;"></div>
<div style="position:absolute;left:199px;top:420px;width:1px;height:29px;background:#bdbdbd;"></div>
<div class="t" style="left:120px;width:77px;text-align:right;top:428px;letter-spacing:0.3px;margin-right:-0.3px;box-sizing:content-box;padding-right:0;">-120</div>
<div style="position:absolute;left:200px;top:420px;width:79px;height:29px;background:#e6e6e6;"></div>
<div style="position:absolute;left:279px;top:420px;width:1px;height:29px;background:#bdbdbd;"></div>
<div class="t" style="left:200px;width:77px;text-align:right;top:428px;letter-spacing:0.3px;margin-right:-0.3px;box-sizing:content-box;padding-right:0;">-0.012000</div>
<div style="position:absolute;left:280px;top:420px;width:79px;height:29px;background:#ffffff;"></div>
<div style="position:absolute;left:359px;top:420px;width:1px;height:29px;background:#bdbdbd;"></div>
<div class="t" style="left:280px;width:77px;text-align:right;top:428px;letter-spacing:0.3px;margin-right:-0.3px;box-sizing:content-box;padding-right:0;">-619</div>
<div style="position:absolute;left:360px;top:420px;width:79px;height:29px;background:#ffffff;"></div>
<div style="position:absolute;left:439px;top:420px;width:1px;height:29px;background:#bdbdbd;"></div>
<div class="t" style="left:360px;width:77px;text-align:right;top:428px;letter-spacing:0.3px;margin-right:-0.3px;box-sizing:content-box;padding-right:0;">-0.061900</div>
<div style="position:absolute;left:0;top:449px;width:423px;height:1px;background:#bdbdbd;"></div>
<div style="position:absolute;left:0px;top:450px;width:39px;height:29px;background:#f0f0f0;"></div>
<div style="position:absolute;left:39px;top:450px;width:1px;height:29px;background:#bdbdbd;"></div>
<div class="t b" style="left:0px;width:39px;text-align:center;top:458px;">14</div>
<div style="position:absolute;left:40px;top:450px;width:79px;height:29px;background:#ffffff;"></div>
<div style="position:absolute;left:119px;top:450px;width:1px;height:29px;background:#bdbdbd;"></div>
<div class="t" style="left:40px;width:77px;text-align:right;top:458px;letter-spacing:0.3px;margin-right:-0.3px;box-sizing:content-box;padding-right:0;">13.000000</div>
<div style="position:absolute;left:120px;top:450px;width:79px;height:29px;background:#e6e6e6;"></div>
<div style="position:absolute;left:199px;top:450px;width:1px;height:29px;background:#bdbdbd;"></div>
<div class="t" style="left:120px;width:77px;text-align:right;top:458px;letter-spacing:0.3px;margin-right:-0.3px;box-sizing:content-box;padding-right:0;">-130</div>
<div style="position:absolute;left:200px;top:450px;width:79px;height:29px;background:#e6e6e6;"></div>
<div style="position:absolute;left:279px;top:450px;width:1px;height:29px;background:#bdbdbd;"></div>
<div class="t" style="left:200px;width:77px;text-align:right;top:458px;letter-spacing:0.3px;margin-right:-0.3px;box-sizing:content-box;padding-right:0;">-0.013000</div>
<div style="position:absolute;left:280px;top:450px;width:79px;height:29px;background:#ffffff;"></div>
<div style="position:absolute;left:359px;top:450px;width:1px;height:29px;background:#bdbdbd;"></div>
<div class="t" style="left:280px;width:77px;text-align:right;top:458px;letter-spacing:0.3px;margin-right:-0.3px;box-sizing:content-box;padding-right:0;">-629</div>
<div style="position:absolute;left:360px;top:450px;width:79px;height:29px;background:#ffffff;"></div>
<div style="position:absolute;left:439px;top:450px;width:1px;height:29px;background:#bdbdbd;"></div>
<div class="t" style="left:360px;width:77px;text-align:right;top:458px;letter-spacing:0.3px;margin-right:-0.3px;box-sizing:content-box;padding-right:0;">-0.062900</div>
<div style="position:absolute;left:0;top:479px;width:423px;height:1px;background:#bdbdbd;"></div>
<div style="position:absolute;left:0px;top:480px;width:39px;height:29px;background:#f0f0f0;"></div>
<div style="position:absolute;left:39px;top:480px;width:1px;height:29px;background:#bdbdbd;"></div>
<div class="t b" style="left:0px;width:39px;text-align:center;top:488px;">15</div>
<div style="position:absolute;left:40px;top:480px;width:79px;height:29px;background:#ffffff;"></div>
<div style="position:absolute;left:119px;top:480px;width:1px;height:29px;background:#bdbdbd;"></div>
<div class="t" style="left:40px;width:77px;text-align:right;top:488px;letter-spacing:0.3px;margin-right:-0.3px;box-sizing:content-box;padding-right:0;">14.000000</div>
<div style="position:absolute;left:120px;top:480px;width:79px;height:29px;background:#e6e6e6;"></div>
<div style="position:absolute;left:199px;top:480px;width:1px;height:29px;background:#bdbdbd;"></div>
<div class="t" style="left:120px;width:77px;text-align:right;top:488px;letter-spacing:0.3px;margin-right:-0.3px;box-sizing:content-box;padding-right:0;">-140</div>
<div style="position:absolute;left:200px;top:480px;width:79px;height:29px;background:#e6e6e6;"></div>
<div style="position:absolute;left:279px;top:480px;width:1px;height:29px;background:#bdbdbd;"></div>
<div class="t" style="left:200px;width:77px;text-align:right;top:488px;letter-spacing:0.3px;margin-right:-0.3px;box-sizing:content-box;padding-right:0;">-0.014000</div>
<div style="position:absolute;left:280px;top:480px;width:79px;height:29px;background:#ffffff;"></div>
<div style="position:absolute;left:359px;top:480px;width:1px;height:29px;background:#bdbdbd;"></div>
<div class="t" style="left:280px;width:77px;text-align:right;top:488px;letter-spacing:0.3px;margin-right:-0.3px;box-sizing:content-box;padding-right:0;">-639</div>
<div style="position:absolute;left:360px;top:480px;width:79px;height:29px;background:#ffffff;"></div>
<div style="position:absolute;left:439px;top:480px;width:1px;height:29px;background:#bdbdbd;"></div>
<div class="t" style="left:360px;width:77px;text-align:right;top:488px;letter-spacing:0.3px;margin-right:-0.3px;box-sizing:content-box;padding-right:0;">-0.063900</div>
<div style="position:absolute;left:0;top:509px;width:423px;height:1px;background:#bdbdbd;"></div>
<div style="position:absolute;left:0px;top:510px;width:39px;height:29px;background:#f0f0f0;"></div>
<div style="position:absolute;left:39px;top:510px;width:1px;height:29px;background:#bdbdbd;"></div>
<div class="t b" style="left:0px;width:39px;text-align:center;top:518px;">16</div>
<div style="position:absolute;left:40px;top:510px;width:79px;height:29px;background:#ffffff;"></div>
<div style="position:absolute;left:119px;top:510px;width:1px;height:29px;background:#bdbdbd;"></div>
<div class="t" style="left:40px;width:77px;text-align:right;top:518px;letter-spacing:0.3px;margin-right:-0.3px;box-sizing:content-box;padding-right:0;">15.000000</div>
<div style="position:absolute;left:120px;top:510px;width:79px;height:29px;background:#e6e6e6;"></div>
<div style="position:absolute;left:199px;top:510px;width:1px;height:29px;background:#bdbdbd;"></div>
<div class="t" style="left:120px;width:77px;text-align:right;top:518px;letter-spacing:0.3px;margin-right:-0.3px;box-sizing:content-box;padding-right:0;">-150</div>
<div style="position:absolute;left:200px;top:510px;width:79px;height:29px;background:#e6e6e6;"></div>
<div style="position:absolute;left:279px;top:510px;width:1px;height:29px;background:#bdbdbd;"></div>
<div class="t" style="left:200px;width:77px;text-align:right;top:518px;letter-spacing:0.3px;margin-right:-0.3px;box-sizing:content-box;padding-right:0;">-0.015000</div>
<div style="position:absolute;left:280px;top:510px;width:79px;height:29px;background:#ffffff;"></div>
<div style="position:absolute;left:359px;top:510px;width:1px;height:29px;background:#bdbdbd;"></div>
<div class="t" style="left:280px;width:77px;text-align:right;top:518px;letter-spacing:0.3px;margin-right:-0.3px;box-sizing:content-box;padding-right:0;">-649</div>
<div style="position:absolute;left:360px;top:510px;width:79px;height:29px;background:#ffffff;"></div>
<div style="position:absolute;left:439px;top:510px;width:1px;height:29px;background:#bdbdbd;"></div>
<div class="t" style="left:360px;width:77px;text-align:right;top:518px;letter-spacing:0.3px;margin-right:-0.3px;box-sizing:content-box;padding-right:0;">-0.064900</div>
<div style="position:absolute;left:0;top:539px;width:423px;height:1px;background:#bdbdbd;"></div>
<div style="position:absolute;left:0px;top:540px;width:39px;height:29px;background:#f0f0f0;"></div>
<div style="position:absolute;left:39px;top:540px;width:1px;height:29px;background:#bdbdbd;"></div>
<div class="t b" style="left:0px;width:39px;text-align:center;top:548px;">17</div>
<div style="position:absolute;left:40px;top:540px;width:79px;height:29px;background:#ffffff;"></div>
<div style="position:absolute;left:119px;top:540px;width:1px;height:29px;background:#bdbdbd;"></div>
<div class="t" style="left:40px;width:77px;text-align:right;top:548px;letter-spacing:0.3px;margin-right:-0.3px;box-sizing:content-box;padding-right:0;">16.000000</div>
<div style="position:absolute;left:120px;top:540px;width:79px;height:29px;background:#e6e6e6;"></div>
<div style="position:absolute;left:199px;top:540px;width:1px;height:29px;background:#bdbdbd;"></div>
<div class="t" style="left:120px;width:77px;text-align:right;top:548px;letter-spacing:0.3px;margin-right:-0.3px;box-sizing:content-box;padding-right:0;">-160</div>
<div style="position:absolute;left:200px;top:540px;width:79px;height:29px;background:#e6e6e6;"></div>
<div style="position:absolute;left:279px;top:540px;width:1px;height:29px;background:#bdbdbd;"></div>
<div class="t" style="left:200px;width:77px;text-align:right;top:548px;letter-spacing:0.3px;margin-right:-0.3px;box-sizing:content-box;padding-right:0;">-0.016000</div>
<div style="position:absolute;left:280px;top:540px;width:79px;height:29px;background:#ffffff;"></div>
<div style="position:absolute;left:359px;top:540px;width:1px;height:29px;background:#bdbdbd;"></div>
<div class="t" style="left:280px;width:77px;text-align:right;top:548px;letter-spacing:0.3px;margin-right:-0.3px;box-sizing:content-box;padding-right:0;">-659</div>
<div style="position:absolute;left:360px;top:540px;width:79px;height:29px;background:#ffffff;"></div>
<div style="position:absolute;left:439px;top:540px;width:1px;height:29px;background:#bdbdbd;"></div>
<div class="t" style="left:360px;width:77px;text-align:right;top:548px;letter-spacing:0.3px;margin-right:-0.3px;box-sizing:content-box;padding-right:0;">-0.065900</div>
<div style="position:absolute;left:0;top:569px;width:423px;height:1px;background:#bdbdbd;"></div>
<div style="position:absolute;left:0px;top:570px;width:39px;height:29px;background:#f0f0f0;"></div>
<div style="position:absolute;left:39px;top:570px;width:1px;height:29px;background:#bdbdbd;"></div>
<div class="t b" style="left:0px;width:39px;text-align:center;top:578px;">18</div>
<div style="position:absolute;left:40px;top:570px;width:79px;height:29px;background:#ffffff;"></div>
<div style="position:absolute;left:119px;top:570px;width:1px;height:29px;background:#bdbdbd;"></div>
<div class="t" style="left:40px;width:77px;text-align:right;top:578px;letter-spacing:0.3px;margin-right:-0.3px;box-sizing:content-box;padding-right:0;">17.000000</div>
<div style="position:absolute;left:120px;top:570px;width:79px;height:29px;background:#e6e6e6;"></div>
<div style="position:absolute;left:199px;top:570px;width:1px;height:29px;background:#bdbdbd;"></div>
<div class="t" style="left:120px;width:77px;text-align:right;top:578px;letter-spacing:0.3px;margin-right:-0.3px;box-sizing:content-box;padding-right:0;">-170</div>
<div style="position:absolute;left:200px;top:570px;width:79px;height:29px;background:#e6e6e6;"></div>
<div style="position:absolute;left:279px;top:570px;width:1px;height:29px;background:#bdbdbd;"></div>
<div class="t" style="left:200px;width:77px;text-align:right;top:578px;letter-spacing:0.3px;margin-right:-0.3px;box-sizing:content-box;padding-right:0;">-0.017000</div>
<div style="position:absolute;left:280px;top:570px;width:79px;height:29px;background:#ffffff;"></div>
<div style="position:absolute;left:359px;top:570px;width:1px;height:29px;background:#bdbdbd;"></div>
<div class="t" style="left:280px;width:77px;text-align:right;top:578px;letter-spacing:0.3px;margin-right:-0.3px;box-sizing:content-box;padding-right:0;">-669</div>
<div style="position:absolute;left:360px;top:570px;width:79px;height:29px;background:#ffffff;"></div>
<div style="position:absolute;left:439px;top:570px;width:1px;height:29px;background:#bdbdbd;"></div>
<div class="t" style="left:360px;width:77px;text-align:right;top:578px;letter-spacing:0.3px;margin-right:-0.3px;box-sizing:content-box;padding-right:0;">-0.066900</div>
<div style="position:absolute;left:0;top:599px;width:423px;height:1px;background:#bdbdbd;"></div>
<div style="position:absolute;left:0px;top:600px;width:39px;height:29px;background:#f0f0f0;"></div>
<div style="position:absolute;left:39px;top:600px;width:1px;height:29px;background:#bdbdbd;"></div>
<div class="t b" style="left:0px;width:39px;text-align:center;top:608px;">19</div>
<div style="position:absolute;left:40px;top:600px;width:79px;height:29px;background:#ffffff;"></div>
<div style="position:absolute;left:119px;top:600px;width:1px;height:29px;background:#bdbdbd;"></div>
<div class="t" style="left:40px;width:77px;text-align:right;top:608px;letter-spacing:0.3px;margin-right:-0.3px;box-sizing:content-box;padding-right:0;">18.000000</div>
<div style="position:absolute;left:120px;top:600px;width:79px;height:29px;background:#e6e6e6;"></div>
<div style="position:absolute;left:199px;top:600px;width:1px;height:29px;background:#bdbdbd;"></div>
<div class="t" style="left:120px;width:77px;text-align:right;top:608px;letter-spacing:0.3px;margin-right:-0.3px;box-sizing:content-box;padding-right:0;">-180</div>
<div style="position:absolute;left:200px;top:600px;width:79px;height:29px;background:#e6e6e6;"></div>
<div style="position:absolute;left:279px;top:600px;width:1px;height:29px;background:#bdbdbd;"></div>
<div class="t" style="left:200px;width:77px;text-align:right;top:608px;letter-spacing:0.3px;margin-right:-0.3px;box-sizing:content-box;padding-right:0;">-0.018000</div>
<div style="position:absolute;left:280px;top:600px;width:79px;height:29px;background:#ffffff;"></div>
<div style="position:absolute;left:359px;top:600px;width:1px;height:29px;background:#bdbdbd;"></div>
<div class="t" style="left:280px;width:77px;text-align:right;top:608px;letter-spacing:0.3px;margin-right:-0.3px;box-sizing:content-box;padding-right:0;">-679</div>
<div style="position:absolute;left:360px;top:600px;width:79px;height:29px;background:#ffffff;"></div>
<div style="position:absolute;left:439px;top:600px;width:1px;height:29px;background:#bdbdbd;"></div>
<div class="t" style="left:360px;width:77px;text-align:right;top:608px;letter-spacing:0.3px;margin-right:-0.3px;box-sizing:content-box;padding-right:0;">-0.067900</div>
<div style="position:absolute;left:0;top:629px;width:423px;height:1px;background:#bdbdbd;"></div>
</div>
<div style="position:absolute;left:1037px;top:104px;width:17px;height:627px;background:#f0f0f0;border-left:1px solid #fff;box-sizing:border-box;"></div>
<div style="position:absolute;left:1038px;top:121px;width:15px;height:109px;background:#cdcdcd;"></div>
<svg style="position:absolute;left:1041px;top:110px" width="9" height="6"><path d="M1.3 5.2 L4.5 2 L7.7 5.2" stroke="#606060" stroke-width="2" fill="none"/></svg>
<svg style="position:absolute;left:1041px;top:720px" width="9" height="6"><path d="M1.3 0.8 L4.5 4 L7.7 0.8" stroke="#606060" stroke-width="2" fill="none"/></svg>
<div style="position:absolute;left:614px;top:731px;width:423px;height:17px;background:#f0f0f0;border-top:1px solid #fff;border-left:1px solid #fff;box-sizing:border-box;"></div>
<div style="position:absolute;left:631px;top:732px;width:360px;height:15px;background:#cdcdcd;"></div>
<svg style="position:absolute;left:619px;top:735px" width="7" height="9"><path d="M5.5 1.2 L2 4.6 L5.5 8" stroke="#606060" stroke-width="2" fill="none"/></svg>
<svg style="position:absolute;left:1026px;top:735px" width="6" height="9"><path d="M1 1 L4.5 4.5 L1 8" stroke="#606060" stroke-width="2" fill="none"/></svg>
<div style="position:absolute;left:1037px;top:731px;width:17px;height:17px;background:#f0f0f0;"></div>
<div style="position:absolute;left:741px;top:766px;width:183px;height:36px;background:#e1e1e1;border:1px solid #adadad;color:#000;box-sizing:content-box;"></div>
<div class="t" style="left:749.50px;top:778px;letter-spacing:0.161px;">Go To Selected Position (G53)</div>
<div style="position:absolute;left:1072px;top:821px;width:2px;height:2px;background:#ababab;"></div>
<div style="position:absolute;left:1072px;top:824px;width:2px;height:2px;background:#ababab;"></div>
<div style="position:absolute;left:1066px;top:827px;width:2px;height:2px;background:#ababab;"></div>
<div style="position:absolute;left:1069px;top:827px;width:2px;height:2px;background:#ababab;"></div>
<div style="position:absolute;left:1072px;top:827px;width:2px;height:2px;background:#ababab;"></div>
</body></html>
